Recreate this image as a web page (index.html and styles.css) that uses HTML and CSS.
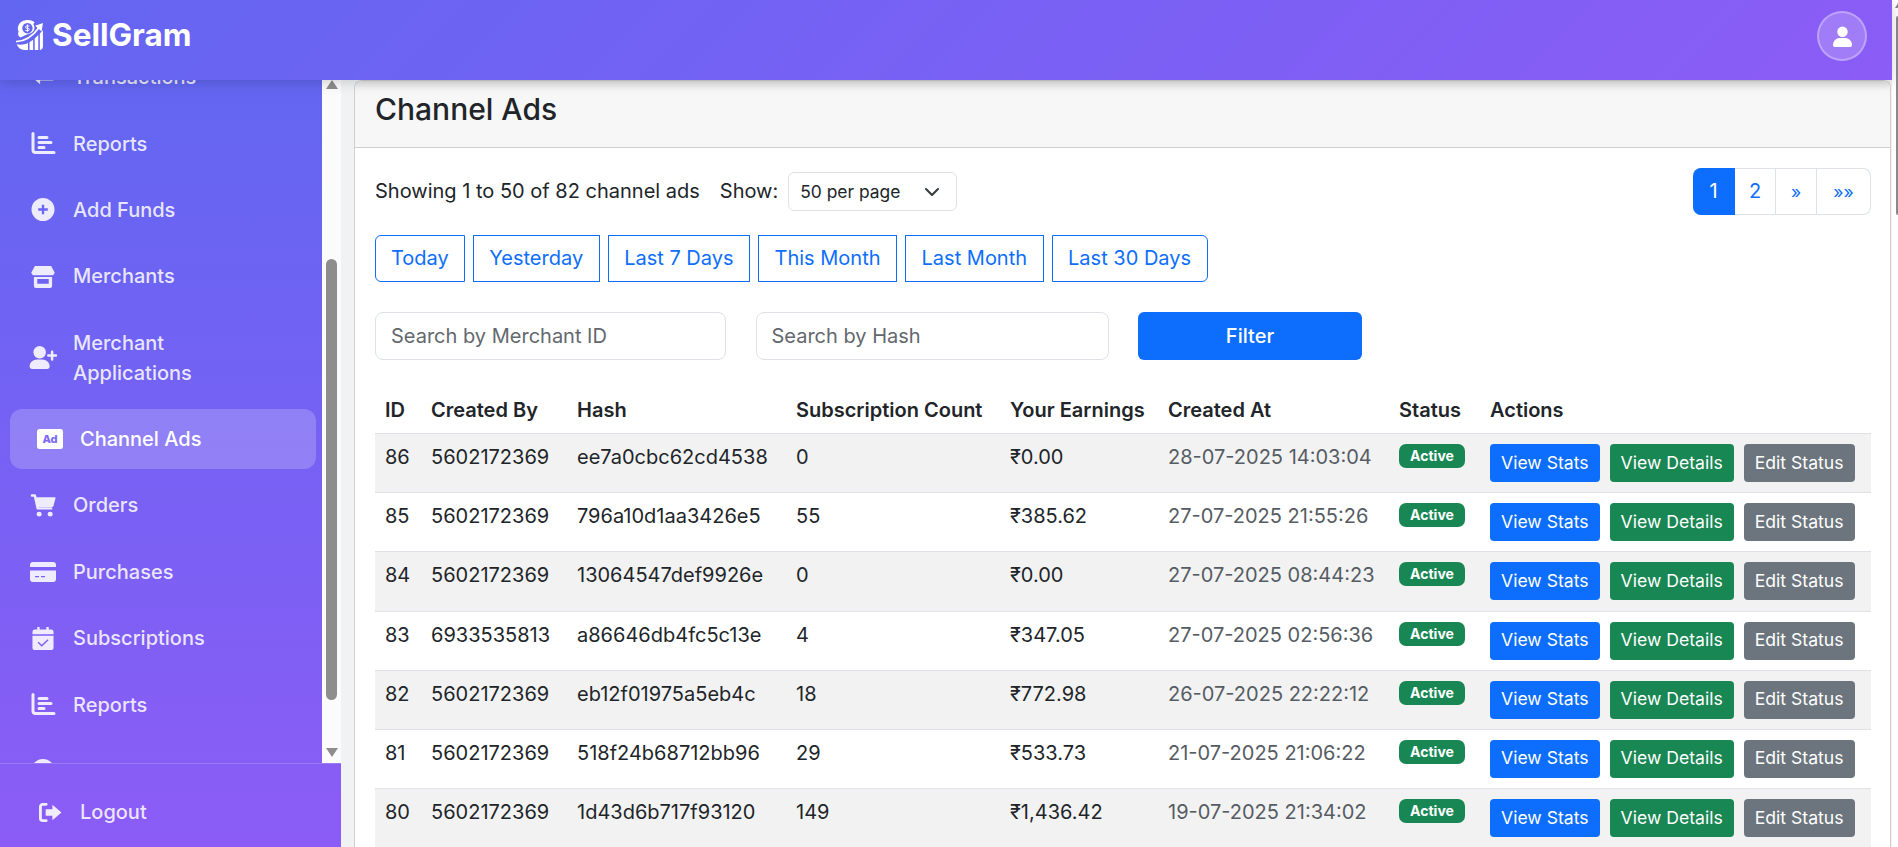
FILE: index.html
```html
<!DOCTYPE html>
<html lang="en">
<head>
<meta charset="utf-8">
<title>Channel Ads - SellGram</title>
<link rel="stylesheet" href="styles.css">
</head>
<body>
<svg class="sprite" aria-hidden="true">
  <symbol id="i-chart" viewBox="-1 0 25 23"><path d="M1.500 1.500V18a2.500 2.500 0 0 0 2.500 2.500h18.500" fill="none" stroke="currentColor" stroke-width="3" stroke-linecap="round"/><path d="M7.500 5.500h8M7.500 10.500h12M7.500 15.500h5" fill="none" stroke="currentColor" stroke-width="3" stroke-linecap="round"/></symbol>
  <symbol id="i-arrows" viewBox="0 0 24 24"><path d="M9 7 2 13l7 6v-4h13a1.500 1.500 0 0 0 0-4H9z" fill="currentColor"/></symbol>
  <symbol id="i-plus" viewBox="0 0 24 24"><path fill-rule="evenodd" d="M12 0a12 12 0 1 1 0 24 12 12 0 0 1 0-24zm-1.200 7v3.800H7v2.400h3.800V17h2.400v-3.800H17v-2.400h-3.800V7z" fill="currentColor"/></symbol>
  <symbol id="i-store" viewBox="0 0 24 24"><path d="M3.500 1h17L24 7.500a3.300 3.300 0 0 1-3.300 3.300H3.300A3.300 3.300 0 0 1 0 7.500z" fill="currentColor"/><path fill-rule="evenodd" d="M2.500 12.500h19V22a2 2 0 0 1-2 2h-15a2 2 0 0 1-2-2zm3.500 2v5h12v-5z" fill="currentColor"/></symbol>
  <symbol id="i-userplus" viewBox="0 0 28 24"><circle cx="10.500" cy="6.500" r="6.500" fill="currentColor"/><path d="M0 21.500C0 17 3.500 14 8 14h5c4.500 0 8 3 8 7.500A2.500 2.500 0 0 1 18.500 24h-16A2.500 2.500 0 0 1 0 21.500z" fill="currentColor"/><path d="M23.500 6v8M19.500 10h8" fill="none" stroke="currentColor" stroke-width="2.600" stroke-linecap="round"/></symbol>
  <symbol id="i-cart" viewBox="0 0 26 24"><path d="M1.500 1.500h3l3 13.500h14" fill="none" stroke="currentColor" stroke-width="2.600" stroke-linecap="round" stroke-linejoin="round"/><path d="M6 3.500h19.200c.6 0 1 .6.800 1.200l-2.200 8c-.1.500-.5.800-1 .800H8z" fill="currentColor"/><circle cx="9" cy="21" r="2.600" fill="currentColor"/><circle cx="20.500" cy="21" r="2.600" fill="currentColor"/></symbol>
  <symbol id="i-card" viewBox="0 0 26 20"><path fill-rule="evenodd" d="M3 0h20a3 3 0 0 1 3 3v2H0V3a3 3 0 0 1 3-3zM0 8.500h26V17a3 3 0 0 1-3 3H3a3 3 0 0 1-3-3zm5 5.500v1.200h4V14zm6 0v1.200h4V14z" fill="currentColor"/></symbol>
  <symbol id="i-cal" viewBox="0 0 22 24"><path fill-rule="evenodd" d="M5 0h2.500v2.500h7V0H17v2.500h2.500A2.500 2.500 0 0 1 22 5v2.500H0V5a2.500 2.500 0 0 1 2.500-2.500H5zM0 9h22v13a2 2 0 0 1-2 2H2a2 2 0 0 1-2-2zm15.800 3.800L9.700 18.500 6.400 15.400l-1 1 4.300 4.200 7.100-6.800z" fill="currentColor"/></symbol>
  <symbol id="i-user" viewBox="0 0 24 24"><circle cx="12" cy="12" r="12" fill="currentColor"/></symbol>
  <symbol id="i-logout" viewBox="0 -1 24 24"><path d="M8 2.500H4.500a2.500 2.500 0 0 0-2.500 2.500v12a2.500 2.500 0 0 0 2.500 2.500H8" fill="none" stroke="currentColor" stroke-width="3" stroke-linecap="round"/><path d="M14.500 3 24 11l-9.500 8v-4.500H7.500v-7h7z" fill="currentColor"/></symbol>
</svg>

<div class="viewport">
  <div class="app">
    <header class="topbar">
      <a class="brand">
        <svg class="brand-logo" viewBox="0 0 26 29" aria-hidden="true">
          <path fill-rule="evenodd" d="M11.500 0c3 0 5.200 1 6.500 2.300l-1.300 1.500a7 7 0 0 1 .3 6.700c-1.500 2-4 3.200-7 3.700L4.200 17C1.700 15 1.500 13 2.500 11 1.500 9.500 1.500 7.500 2.200 5.500 3.500 2 7 0 11.500 0zM11 3a5 5 0 1 0 .01 0z" fill="#fff"/>
          <path d="M11 4.200v7.300M13 5.800h-2.700a1.100 1.100 0 0 0 0 2.200h1.400a1.100 1.100 0 0 1 0 2.200H9" fill="none" stroke="#fff" stroke-width=".9"/>
          <path d="M0 21C8 20.500 16 16 22 7.500" fill="none" stroke="#fff" stroke-width="1.700"/>
          <path d="M18.500 5.500 26 3l-1.300 8z" fill="#fff"/>
          <path d="M.5 23.500c4 .8 8 .2 11-1.200V29H8c-3.500 0-6-2.200-7.500-5.500zM13 21.500l3.500-2.300V29H13zM18 18l3.500-3.500V29H18zM23 13l3-3v15.500c0 2-1.500 3.500-3 3.500z" fill="#fff"/>
        </svg>
        <span class="brand-name">SellGram</span>
      </a>
      <div class="avatar">
        <svg class="avatar-icon" viewBox="0 0 20 22" aria-hidden="true"><circle cx="10" cy="6" r="5.500" fill="#fff"/><path d="M0 20c0-4.500 3.500-7.500 7-7.500h6c3.500 0 7 3 7 7.500 0 1.200-.8 2-2 2H2c-1.200 0-2-.8-2-2z" fill="#fff"/></svg>
      </div>
    </header>

    <div class="shell">
      <aside class="sidebar">
        <div class="side-scroll">
          <nav class="side-nav">
            <ul class="nav-list">
              <li class="nav-item"><svg class="ico"><use href="#i-arrows"/></svg><span>Transactions</span></li>
              <li class="nav-item"><svg class="ico"><use href="#i-chart"/></svg><span>Reports</span></li>
              <li class="nav-item"><svg class="ico"><use href="#i-plus"/></svg><span>Add Funds</span></li>
              <li class="nav-item"><svg class="ico"><use href="#i-store"/></svg><span>Merchants</span></li>
              <li class="nav-item"><svg class="ico"><use href="#i-userplus"/></svg><span>Merchant Applications</span></li>
              <li class="nav-item active">
                <svg class="ico ad" viewBox="0 0 26 20"><rect width="26" height="20" rx="2.500" fill="#fff"/><text x="13" y="14" text-anchor="middle" class="ad-text">Ad</text></svg>
                <span>Channel Ads</span>
              </li>
              <li class="nav-item"><svg class="ico"><use href="#i-cart"/></svg><span>Orders</span></li>
              <li class="nav-item"><svg class="ico ico-card"><use href="#i-card"/></svg><span>Purchases</span></li>
              <li class="nav-item"><svg class="ico"><use href="#i-cal"/></svg><span>Subscriptions</span></li>
              <li class="nav-item"><svg class="ico"><use href="#i-chart"/></svg><span>Reports</span></li>
              <li class="nav-item"><svg class="ico"><use href="#i-user"/></svg><span>Profile</span></li>
            </ul>
          </nav>
          <div class="side-bar-track">
            <span class="arrow up"></span>
            <span class="thumb-room"><span class="thumb"></span></span>
            <span class="arrow down"></span>
          </div>
        </div>
        <div class="side-foot">
          <div class="nav-item logout"><svg class="ico"><use href="#i-logout"/></svg><span>Logout</span></div>
        </div>
      </aside>

      <main class="main">
        <section class="card">
          <div class="card-head"><h3 class="card-title">Channel Ads</h3></div>
          <div class="card-body">
            <div class="toolbar">
              <div class="summary">
                <span>Showing 1 to 50 of 82 channel ads</span>
                <span class="show-label">Show:</span>
                <div class="select">
                  <span>50 per page</span>
                  <svg class="chev" viewBox="0 0 16 16" aria-hidden="true"><path d="m2 5 6 6 6-6" fill="none" stroke="#343a40" stroke-width="2" stroke-linecap="round" stroke-linejoin="round"/></svg>
                </div>
              </div>
              <div class="pager">
                <a class="page current">1</a>
                <a class="page p2">2</a>
                <a class="page p3">»</a>
                <a class="page p4">»»</a>
              </div>
            </div>
            <div class="quick">
              <a class="qbtn">Today</a>
              <a class="qbtn">Yesterday</a>
              <a class="qbtn">Last 7 Days</a>
              <a class="qbtn">This Month</a>
              <a class="qbtn">Last Month</a>
              <a class="qbtn">Last 30 Days</a>
            </div>
            <form class="filters">
              <input class="field" type="text" placeholder="Search by Merchant ID">
              <input class="field" type="text" placeholder="Search by Hash">
              <button class="filter-btn" type="button">Filter</button>
            </form>
            <table class="grid">
              <colgroup>
                <col class="c1"><col class="c2"><col class="c3"><col class="c4"><col class="c5"><col class="c6"><col class="c7"><col class="c8">
              </colgroup>
              <thead>
                <tr><th>ID</th><th>Created By</th><th>Hash</th><th>Subscription Count</th><th>Your Earnings</th><th>Created At</th><th>Status</th><th>Actions</th></tr>
              </thead>
              <tbody>
                <tr><td>86</td><td>5602172369</td><td>ee7a0cbc62cd4538</td><td>0</td><td>₹0.00</td><td class="muted">28-07-2025 14:03:04</td><td><span class="badge">Active</span></td><td><div class="acts"><a class="btn blue">View Stats</a><a class="btn green">View Details</a><a class="btn gray">Edit Status</a></div></td></tr>
                <tr><td>85</td><td>5602172369</td><td>796a10d1aa3426e5</td><td>55</td><td>₹385.62</td><td class="muted">27-07-2025 21:55:26</td><td><span class="badge">Active</span></td><td><div class="acts"><a class="btn blue">View Stats</a><a class="btn green">View Details</a><a class="btn gray">Edit Status</a></div></td></tr>
                <tr><td>84</td><td>5602172369</td><td>13064547def9926e</td><td>0</td><td>₹0.00</td><td class="muted">27-07-2025 08:44:23</td><td><span class="badge">Active</span></td><td><div class="acts"><a class="btn blue">View Stats</a><a class="btn green">View Details</a><a class="btn gray">Edit Status</a></div></td></tr>
                <tr><td>83</td><td>6933535813</td><td>a86646db4fc5c13e</td><td>4</td><td>₹347.05</td><td class="muted">27-07-2025 02:56:36</td><td><span class="badge">Active</span></td><td><div class="acts"><a class="btn blue">View Stats</a><a class="btn green">View Details</a><a class="btn gray">Edit Status</a></div></td></tr>
                <tr><td>82</td><td>5602172369</td><td>eb12f01975a5eb4c</td><td>18</td><td>₹772.98</td><td class="muted">26-07-2025 22:22:12</td><td><span class="badge">Active</span></td><td><div class="acts"><a class="btn blue">View Stats</a><a class="btn green">View Details</a><a class="btn gray">Edit Status</a></div></td></tr>
                <tr><td>81</td><td>5602172369</td><td>518f24b68712bb96</td><td>29</td><td>₹533.73</td><td class="muted">21-07-2025 21:06:22</td><td><span class="badge">Active</span></td><td><div class="acts"><a class="btn blue">View Stats</a><a class="btn green">View Details</a><a class="btn gray">Edit Status</a></div></td></tr>
                <tr><td>80</td><td>5602172369</td><td>1d43d6b717f93120</td><td>149</td><td>₹1,436.42</td><td class="muted">19-07-2025 21:34:02</td><td><span class="badge">Active</span></td><td><div class="acts"><a class="btn blue">View Stats</a><a class="btn green">View Details</a><a class="btn gray">Edit Status</a></div></td></tr>
              </tbody>
            </table>
          </div>
        </section>
      </main>
    </div>
  </div>
  <div class="page-scroll"><span class="page-arrow"></span><span class="page-thumb"></span></div>
</div>
</body>
</html>
```

FILE: styles.css
```css
* { box-sizing: border-box; }
html, body { margin: 0; height: 100%; overflow: hidden; }
body { font-family: Inter, "Liberation Sans", sans-serif; font-size: 20px; line-height: 27px; color: #212529; background: #fff; }
a { text-decoration: none; }
.sprite { display: none; }

.viewport { display: flex; height: 847px; width: 1898px; overflow: hidden; }
.app { flex: 0 0 1892px; display: flex; flex-direction: column; min-width: 0; }
.page-scroll { flex: 1; background: #fff; display: flex; flex-direction: column; align-items: flex-end; padding-top: 3px; }
.page-arrow { width: 0; height: 0; border-left: 3px solid transparent; border-bottom: 5px solid #8a8a8a; }
.page-thumb { width: 2px; height: 199px; margin-top: 8px; background: #8a8a8a; border-radius: 2px 0 0 2px; }

.topbar { flex: 0 0 80px; display: flex; justify-content: space-between; align-items: flex-start; padding: 11px 25px 0 16px; background: linear-gradient(135deg, #6366f1, #8b5cf6); box-shadow: 0 2px 12px rgba(0,0,0,.18); position: relative; z-index: 2; }
.brand { display: flex; align-items: center; gap: 9px; height: 48px; color: #fff; }
.brand-logo { width: 27px; height: 30px; }
.brand-name { font-size: 31.500px; font-weight: 700; line-height: 36px; }
.avatar { width: 50px; height: 50px; border-radius: 50%; background: rgba(255,255,255,.2); border: 2px solid rgba(255,255,255,.3); display: flex; align-items: center; justify-content: center; }
.avatar-icon { width: 19px; height: 21px; }

.shell { flex: 1; display: flex; min-height: 0; }
.sidebar { flex: 0 0 341px; display: flex; flex-direction: column; background: linear-gradient(180deg, #6366f1, #8b5cf6); }
.side-scroll { flex: 0 0 683px; display: flex; min-height: 0; }
.side-nav { width: 322px; overflow: hidden; }
.nav-list { list-style: none; margin: -36px 0 0; padding: 0; display: flex; flex-direction: column; }
.nav-item { display: flex; align-items: center; margin: 3.200px 6px 3.200px 10px; padding: 15px 50px 15px 18px; border-radius: 12px; font-size: 20px; font-weight: 500; line-height: 30px; color: rgba(255,255,255,.85); }
.nav-item.active { background: rgba(255,255,255,.2); color: #fff; padding-left: 25px; }
.ico { flex: 0 0 30px; width: 30px; height: 23px; margin-right: 15px; color: rgba(255,255,255,.88); }
.ico.ad { height: 20px; }
.ico.ico-card { height: 20px; }
.ad-text { font: 800 11px Inter, sans-serif; fill: #7a68f6; }

.side-bar-track { width: 19px; background: #fbfbfb; display: flex; flex-direction: column; align-items: center; }
.arrow { width: 0; height: 0; }
.arrow.up { border-left: 6.500px solid transparent; border-right: 6.500px solid transparent; border-bottom: 9px solid #8d8d8d; }
.arrow.down { border-left: 6.500px solid transparent; border-right: 6.500px solid transparent; border-top: 9px solid #8d8d8d; margin-bottom: 6px; }
.thumb-room { flex: 1; display: flex; flex-direction: column; justify-content: flex-end; padding-bottom: 48px; }
.thumb { width: 11px; height: 441px; background: #8d8d8d; border-radius: 6px; }

.side-foot { flex: 1; border-top: 1px solid rgba(255,255,255,.18); padding-top: 18px; }
.nav-item.logout { margin: 0 6px 0 10px; padding-left: 25px; }

.main { flex: 1; min-width: 0; background: #f1f2f4; padding-left: 13px; padding-right: 1px; overflow: hidden; }
.card { background: #fff; border: 1px solid #cfcfcf; border-bottom: 0; border-radius: 8px 8px 0 0; height: 100%; overflow: hidden; }
.card-head { height: 67px; background: #f7f7f7; border-bottom: 1px solid #cfcfcf; padding: 0 20px 10px; display: flex; align-items: center; box-shadow: inset 0 10px 10px -8px rgba(0,0,0,.12); }
.card-title { margin: 0; font-size: 30px; font-weight: 500; line-height: 36px; }
.card-body { padding: 20px 19px 0 20px; }

.toolbar { display: flex; justify-content: space-between; align-items: flex-start; }
.summary { display: flex; align-items: center; height: 47px; }
.show-label { margin-left: 20px; margin-right: 10px; }
.select { width: 169px; height: 39px; padding: 0 11px; display: flex; align-items: center; justify-content: space-between; border: 1px solid #dee2e6; border-radius: 6px; font-size: 17.400px; }
.chev { width: 16px; height: 16px; margin-right: 5px; }

.pager { display: flex; height: 47px; border-radius: 8px; }
.page { display: flex; align-items: center; justify-content: center; border: 1px solid #dee2e6; border-left: 0; color: #0d6efd; font-size: 20px; background: #fff; }
.page.current { width: 42px; background: #0d6efd; border-color: #0d6efd; color: #fff; border-radius: 8px 0 0 8px; }
.page.p2 { width: 41px; }
.page.p3 { width: 41px; font-size: 17.600px; }
.page.p4 { width: 54px; font-size: 17.600px; border-radius: 0 8px 8px 0; }

.quick { display: flex; gap: 8px; margin-top: 20px; }
.qbtn { height: 47px; padding: 0 15.500px; display: flex; align-items: center; color: #0d6efd; border: 1px solid #0d6efd; font-size: 20px; }
.qbtn:first-child { border-radius: 6px 0 0 6px; padding: 0 15px; }
.qbtn:last-child { border-radius: 0 6px 6px 0; }

.filters { display: flex; gap: 29.500px; margin-top: 30px; }
.field { width: 351px; height: 48px; padding: 0 15px; border: 1px solid #dee2e6; border-radius: 8px; font: 400 20px Inter, sans-serif; color: #212529; background: #fff; }
.field:nth-child(2) { width: 353px; }
.field::placeholder { color: #63686e; opacity: 1; }
.filter-btn { width: 224px; height: 48px; border: 0; border-radius: 6px; background: #0d6efd; color: #fff; font: 500 20px Inter, sans-serif; }

.grid { width: 100%; table-layout: fixed; border-collapse: collapse; margin-top: 26px; }
.c1 { width: 46px; } .c2 { width: 146px; } .c3 { width: 219px; } .c4 { width: 214px; } .c5 { width: 158px; } .c6 { width: 231px; } .c7 { width: 91px; }
.grid th { text-align: left; padding: 11px 10px 9px; font-weight: 600; line-height: 27px; border-bottom: 1px solid #dee2e6; white-space: nowrap; }
.grid td { padding: 10px; height: 59.200px; vertical-align: top; border-bottom: 1px solid #dee2e6; line-height: 27px; white-space: nowrap; }
.grid tbody tr:nth-child(odd) td { background: #f2f2f2; }
.muted { color: #565c63; }
.badge { display: inline-block; height: 24px; width: 66px; background: #198754; color: #fff; border-radius: 7px; font-size: 14px; font-weight: 700; line-height: 24px; text-align: center; vertical-align: top; }
.acts { display: flex; gap: 10px; }
.btn { height: 38px; padding: 0 11px 2px; display: flex; align-items: center; border-radius: 4px; color: #fff; font-size: 17.600px; }
.blue { background: #0d6efd; } .green { background: #198754; } .gray { background: #6c757d; }
```
